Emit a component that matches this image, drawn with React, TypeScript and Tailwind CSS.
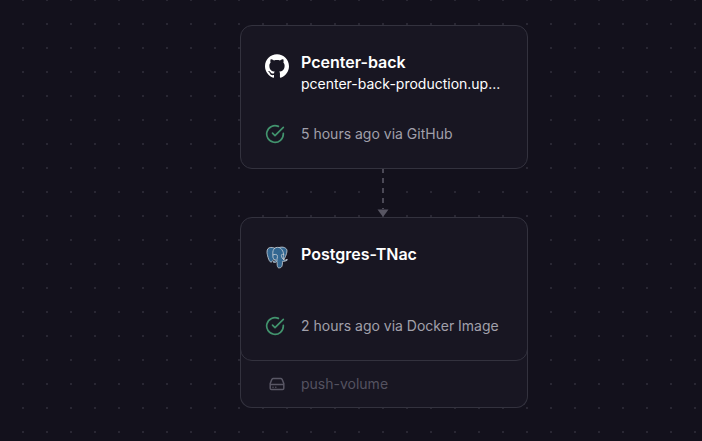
import React from "react";
import { SiGithub } from "react-icons/si";

function DotGrid() {
  return (
    <svg className="absolute inset-0 h-full w-full" shapeRendering="crispEdges">
      <defs>
        <pattern id="dots" x="22" y="23" width="24" height="24" patternUnits="userSpaceOnUse">
          <rect width="2" height="2" fill="#292733" />
        </pattern>
      </defs>
      <rect width="100%" height="100%" fill="url(#dots)" />
    </svg>
  );
}

function CheckIcon() {
  return (
    <svg className="h-5 w-5" viewBox="0 0 24 24" fill="none" stroke="#42946e" strokeWidth="2" strokeLinecap="round" strokeLinejoin="round">
      <path d="M22 11.08V12a10 10 0 1 1-5.93-9.14" />
      <path d="M22 4 12 14.01l-3-3" />
    </svg>
  );
}

function DriveIcon() {
  return (
    <svg className="h-4 w-4" viewBox="0 0 16 16" fill="none" stroke="#595765" strokeWidth="1.5" strokeLinecap="round" strokeLinejoin="round">
      <path d="M1.2 8.6h13.6M4.2 2.5h7.6c.6 0 1 .3 1.3.8l1.7 4.2v4.7c0 .8-.6 1.3-1.3 1.3h-11c-.8 0-1.3-.6-1.3-1.3V7.5l1.7-4.2c.3-.5.7-.8 1.3-.8z" />
      <path d="M4 11.2h.01M6.8 11.2h.01" />
    </svg>
  );
}

function PostgresIcon() {
  return (
    <svg className="-mt-px h-[23px] w-[22px]" viewBox="0 0 432 445" strokeLinecap="round" strokeLinejoin="round">
      <path
        d="M402.395 271.23c-50.302 10.376-53.76-6.655-53.76-6.655 53.111-78.808 75.313-178.843 56.153-203.326-52.27-66.785-142.752-35.2-144.262-34.38l-.486.087c-9.938-2.063-21.06-3.292-33.56-3.496-22.761-.373-40.026 5.967-53.127 15.902 0 0-161.411-66.495-153.904 83.63 1.597 31.938 45.776 241.657 98.471 178.312 19.26-23.163 37.869-42.748 37.869-42.748 9.243 6.14 20.308 9.272 31.908 8.147l.901-.765c-.28 2.876-.152 5.689.361 9.019-13.575 15.167-9.586 17.83-36.723 23.416-27.459 5.659-11.328 15.734-.796 18.367 12.768 3.193 42.305 7.716 62.268-20.224l-.795 3.188c5.319 4.26 4.965 30.619 5.72 49.452.756 18.834 2.017 36.409 5.856 46.771 3.839 10.36 8.369 37.05 44.036 29.406 29.809-6.388 52.6-15.582 54.677-101.107l3-27c33 3 76-9 92-25 8-9-5-12-15.4-7.4z"
        fill="#336791"
        stroke="#c3cbd3"
        strokeWidth="17"
      />
      <g fill="none" stroke="#c3cbd3" strokeWidth="17">
        <path d="M173 38c-34 26-42 70-39 112 1 18 4 28 1 45-4 24 8 47 24 62" />
        <path d="M262 26c38 18 68 62 78 100 5 22 11 30 8 50-4 24-14 36-4 58l4 30" />
        <path d="M216 286c2-18-4-34 4-50 7-20 8-45-2-62-15-15-50-16-80-4" />
        <path d="M348 264c-12-8-24-18-31-32-10-22-22-50-10-66 10-8 26-8 40-4" />
      </g>
    </svg>
  );
}

interface ServiceProps {
  icon: React.ReactNode;
  name: string;
  domain?: string;
  status: string;
}

function ServiceCard({ icon, name, domain, status }: ServiceProps) {
  return (
    <div className="flex h-36 w-72 flex-col justify-between rounded-xl border border-[#33323e] bg-[#181622] px-6 pt-6 pb-[22px]">
      <div className="flex gap-3">
        <div className="flex h-8 w-6 shrink-0 items-center justify-center">{icon}</div>
        <div className="min-w-0">
          <div className="text-base leading-6 font-semibold text-white">{name}</div>
          {domain && <div className="text-sm leading-5 text-white">{domain}</div>}
        </div>
      </div>
      <div className="flex items-center gap-4">
        <CheckIcon />
        <span className="text-sm leading-6 text-[#a1a0ab]">{status}</span>
      </div>
    </div>
  );
}

function Connector() {
  return (
    <svg className="-ml-0.5 block h-12 w-4" viewBox="0 0 16 48">
      <path d="M8 -1V40" stroke="#4b4956" strokeWidth="2" strokeDasharray="5 5" />
      <path d="M2.5 40.5h11L8 48z" fill="#575562" />
    </svg>
  );
}

export default function App() {
  return (
    <main className="relative h-[441px] w-[702px] overflow-hidden bg-[#13111c] font-['Inter',sans-serif]">
      <DotGrid />
      <div className="relative flex w-[768px] flex-col items-center pt-[25px]">
        <ServiceCard
          icon={<SiGithub className="h-6 w-6 text-white" />}
          name="Pcenter-back"
          domain="pcenter-back-production.up..."
          status="5 hours ago via GitHub"
        />
        <Connector />
        <div className="rounded-xl bg-[#181622]">
          <ServiceCard icon={<PostgresIcon />} name="Postgres-TNac" status="2 hours ago via Docker Image" />
          <div className="-mt-3 flex h-[59px] items-center gap-4 rounded-b-xl border border-t-0 border-[#33323e] px-7 pt-3">
            <DriveIcon />
            <span className="text-sm text-[#545260]">push-volume</span>
          </div>
        </div>
      </div>
    </main>
  );
}
